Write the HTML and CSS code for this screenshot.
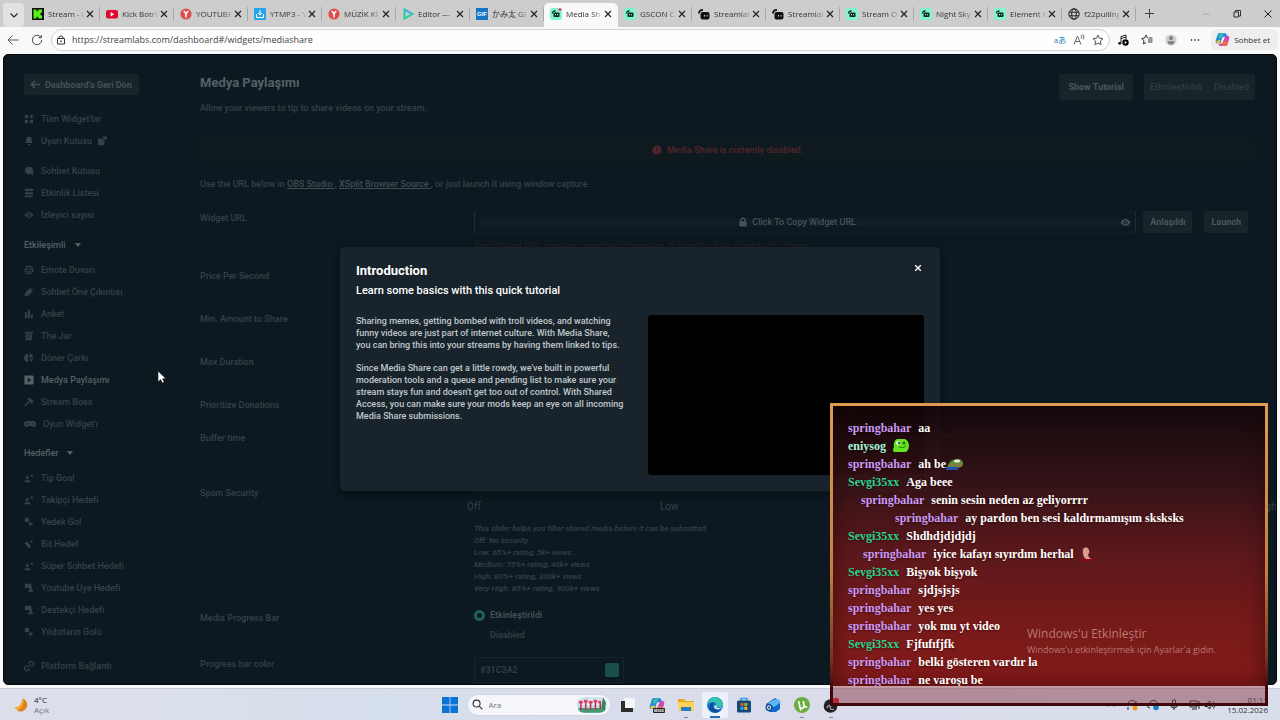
FILE: index.html
```html
<!DOCTYPE html>
<html lang="tr">
<head>
<meta charset="utf-8">
<title>Media Share</title>
<link rel="stylesheet" href="styles.css">
</head>
<body>
<svg class="defs" aria-hidden="true">
  <symbol id="x" viewBox="0 0 10 10"><path d="M2 2l6 6M8 2l-6 6" fill="none" stroke="currentColor" stroke-width="1.2"/></symbol>
  <symbol id="y" viewBox="0 0 12 12"><circle cx="6" cy="6" r="5.6" fill="#e04b4b"/><path d="M3.8 2.8L6 6l2.2-3.2M6 6v3.6" fill="none" stroke="#fff" stroke-width="1.5"/></symbol>
  <symbol id="sl" viewBox="0 0 12 12"><rect width="12" height="12" rx="3" fill="#80f5d2"/><rect x="3.500" y="4.500" width="6" height="4.500" rx="1" fill="#12251f"/><path d="M2.500 5.500Q2.300 3 5.500 3" fill="none" stroke="#12251f" stroke-width="1.300"/><path d="M5.500 6v1.300M7.500 6v1.300" stroke="#80f5d2"/></symbol>
  <symbol id="slb" viewBox="0 0 12 12"><rect x="2.500" y="4" width="9" height="7.500" rx="2" fill="#111"/><path d="M1 5.500Q1 1.800 5 1.800" fill="none" stroke="#111" stroke-width="1.800"/><path d="M6.500 7v1.500M9 7v1.500" stroke="#ccc"/></symbol>
  <symbol id="grid" viewBox="0 0 12 12"><path d="M1 1h4v4H1zM1 7h4v4H1zM7 7h4v4H7zM9 .5L11.500 3 9 5.500 6.500 3z" fill="currentColor"/></symbol>
  <symbol id="bell" viewBox="0 0 12 12"><path d="M6 1a3.300 3.300 0 013.300 3.300V7l1.700 1.500H1L2.700 7V4.300A3.300 3.300 0 016 1zM4.500 9.500h3a1.500 1.500 0 01-3 0z" fill="currentColor"/></symbol>
  <symbol id="ext" viewBox="0 0 12 12"><path d="M1 3h5v3h3v5H1z" fill="currentColor"/><path d="M5 7l5.500-5.500M7 1.500h4v4" fill="none" stroke="currentColor" stroke-width="1.800"/></symbol>
  <symbol id="chat" viewBox="0 0 12 12"><path d="M6 1a5 4.500 0 015 4.500V11L8.500 9.500A5 4.500 0 116 1z" fill="currentColor"/></symbol>
  <symbol id="list" viewBox="0 0 12 12"><path d="M1 1h10v2.500H1zM1 5h10v2.500H1zM1 9h10v2H1z" fill="currentColor"/></symbol>
  <symbol id="eye" viewBox="0 0 12 12"><path d="M.5 6Q6-1.500 11.500 6 6 13.500.5 6z" fill="currentColor"/><circle cx="6" cy="6" r="2.300" fill="#0d1a21"/><circle cx="6" cy="6" r="1.100" fill="currentColor"/></symbol>
  <symbol id="smile" viewBox="0 0 12 12"><circle cx="6" cy="6" r="4.500" fill="none" stroke="currentColor" stroke-width="1.600"/><path d="M1.500 5h9M4 7.500q2 1.500 4 0" fill="none" stroke="currentColor" stroke-width="1.300"/></symbol>
  <symbol id="pen" viewBox="0 0 12 12"><path d="M1 11l1-4 5-5 3 3-5 5zM8 1l3 3" fill="currentColor" stroke="currentColor"/></symbol>
  <symbol id="bars" viewBox="0 0 12 12"><path d="M1 4h2.500v7H1zM4.500 1H7v10H4.500zM8 7h2.500v4H8z" fill="currentColor"/></symbol>
  <symbol id="jar" viewBox="0 0 12 12"><path d="M1 1h10v2H1zM2 4h8l-1 7H2z" fill="currentColor"/><path d="M4 6h4M4 8h3" stroke="#0d1a21"/></symbol>
  <symbol id="wheel" viewBox="0 0 12 12"><path d="M5 1a5 5 0 000 10zM6.500 1a5 5 0 014.500 4.500L6.500 6zM6.500 7.500L11 7a5 5 0 01-3 3.500z" fill="currentColor"/></symbol>
  <symbol id="play" viewBox="0 0 12 12"><rect x=".5" y=".5" width="11" height="11" rx="1" fill="currentColor"/><path d="M4.500 3.300L8.700 6l-4.200 2.700z" fill="#0d1a21"/></symbol>
  <symbol id="boss" viewBox="0 0 12 12"><path d="M1 10.500l5-5M4.500 2l4 4M6.500 1.500l4 4-2 2" fill="none" stroke="currentColor" stroke-width="2"/></symbol>
  <symbol id="pad" viewBox="0 0 12 12"><path d="M3 3h6a3 3 0 010 6L7.500 8h-3L3 9a3 3 0 010-6z" fill="currentColor"/><path d="M2.500 6h2M8 6h1.500" stroke="#0d1a21"/></symbol>
  <symbol id="goal" viewBox="0 0 12 12"><circle cx="4" cy="5.500" r="1.800" fill="currentColor"/><path d="M.5 11q0-3 3.500-3t4 3z" fill="currentColor"/><path d="M9.500 1v4M7.500 3h4" stroke="currentColor"/></symbol>
  <symbol id="star" viewBox="0 0 12 12"><path d="M1 1h5v5H1zM8 5l1 2 2.500 1L9 9.300 8 11.500 7 9.300 4.500 8 7 7z" fill="currentColor"/></symbol>
  <symbol id="bit" viewBox="0 0 12 12"><path d="M1 5l2.500-1.500L8 8l-2 3zM9 1v4M7 3h4" fill="currentColor" stroke="currentColor"/></symbol>
  <symbol id="tube" viewBox="0 0 12 12"><path d="M1 1h8v5H1zM5 11q0-3 3-3t3 3z" fill="currentColor"/><circle cx="8" cy="6.500" r="1.800" fill="currentColor"/></symbol>
  <symbol id="link" viewBox="0 0 12 12"><path d="M5 3l1.500-1.500a2.500 2.500 0 014 4L9 7M7 9l-1.500 1.500a2.500 2.500 0 01-4-4L3 5M4 8l4-4" fill="none" stroke="currentColor" stroke-width="1.400"/></symbol>
  <symbol id="copilot" viewBox="0 0 16 16"><path d="M5 1h5q2 0 2.500 2l.5 2H9.500Q8 5 7.300 7L6 12H2Q0 12 1 8.500L2.700 3Q3.300 1 5 1z" fill="#2087dd"/><path d="M2 9l4-.5L5 12H2.500Q1 12 2 9z" fill="#f3c52d"/><path d="M11 4h2.500Q16 4 15 7.500L13.300 13q-.6 2-2.300 2H6q-2 0-2.500-2.500h3q1.500 0 2.100-2z" fill="#cb48bb"/><path d="M9 9l-1 3.500q-.5 2-2.500 2.500H11q1.800 0 2.300-2l1-3z" fill="#f1644f"/><path d="M4 3l3-2h3L7 6 4 7z" fill="#34bda9"/></symbol>
</svg>

<nav class="tabs" aria-label="Sekmeler">
  <button class="tab-menu" aria-label="Sekme menüsü"><svg viewBox="0 0 12 12"><path d="M2.500 4.500L6 8l3.500-3.500" fill="none" stroke="#222" stroke-width="1.100"/></svg></button>
  <div class="tab"><svg class="fav" viewBox="0 0 12 12"><rect width="12" height="12" fill="#111"/><path d="M1.500 1.500h3v2h1v-1h1v-1h3.500v3H9v1H8v1h1v1h1v3H6.500v-1h-1v-1h-1v2h-3z" fill="#55f51c"/></svg><span>Stream - K</span><svg class="close"><use href="#x"/></svg></div>
  <div class="tab"><svg class="fav" viewBox="0 0 12 12"><rect y="2" width="12" height="8.500" rx="2" fill="#e00831"/><path d="M4.700 4l3.500 2.200-3.500 2.200z" fill="#fff"/></svg><span>Kick Botri</span><svg class="close"><use href="#x"/></svg></div>
  <div class="tab"><svg class="fav"><use href="#y"/></svg><span>YOUTUBE</span><svg class="close"><use href="#x"/></svg></div>
  <div class="tab"><svg class="fav" viewBox="0 0 12 12"><rect width="12" height="12" rx="1" fill="#26a4e8"/><path d="M6 2v5M4 5l2 2 2-2M2.500 6v3.500h7V6" fill="none" stroke="#fff"/></svg><span>YTMP3 - Y</span><svg class="close"><use href="#x"/></svg></div>
  <div class="tab"><svg class="fav"><use href="#y"/></svg><span>MÜZİK Kİ</span><svg class="close"><use href="#x"/></svg></div>
  <div class="tab"><svg class="fav" viewBox="0 0 12 12"><path d="M2.500 1.500v9L10.500 6z" fill="none" stroke="#20cfa4" stroke-width="2"/><path d="M3 2l7 4" stroke="#51a7f5" stroke-width="1.500"/></svg><span>Editor — C</span><svg class="close"><use href="#x"/></svg></div>
  <div class="tab"><svg class="fav" viewBox="0 0 12 12"><rect width="12" height="12" fill="#1674c6"/><text x="6" y="8" class="gif" text-anchor="middle">GIF</text></svg><span>かみ太 GIF</span><svg class="close"><use href="#x"/></svg></div>
  <div class="tab active"><svg class="fav" viewBox="0 0 12 12"><use href="#sl"/><circle cx="10" cy="1.500" r="1.500" fill="#ed4265"/></svg><span>Media Sha</span><svg class="close"><use href="#x"/></svg></div>
  <div class="tab"><svg class="fav"><use href="#sl"/></svg><span>GSCON Cl</span><svg class="close"><use href="#x"/></svg></div>
  <div class="tab"><svg class="fav"><use href="#slb"/></svg><span>Streamlab</span><svg class="close"><use href="#x"/></svg></div>
  <div class="tab"><svg class="fav"><use href="#slb"/></svg><span>Streamlab</span><svg class="close"><use href="#x"/></svg></div>
  <div class="tab"><svg class="fav"><use href="#sl"/></svg><span>Stream Ov</span><svg class="close"><use href="#x"/></svg></div>
  <div class="tab"><svg class="fav"><use href="#sl"/></svg><span>Night Sky</span><svg class="close"><use href="#x"/></svg></div>
  <div class="tab"><svg class="fav"><use href="#sl"/></svg><span>Element H</span><svg class="close"><use href="#x"/></svg></div>
  <div class="tab"><svg class="fav" viewBox="0 0 12 12"><g fill="none" stroke="#222"><circle cx="6" cy="6" r="5.200"/><ellipse cx="6" cy="6" rx="2.300" ry="5.200"/><path d="M1.300 4.200h9.400M1.300 7.800h9.400"/></g></svg><span>f22pulling</span><svg class="close"><use href="#x"/></svg></div>
  <button class="new-tab" aria-label="Yeni sekme"><svg viewBox="0 0 12 12"><path d="M6 1v10M1 6h10" stroke="#333"/></svg></button>
  <div class="win">
    <button aria-label="Simge durumuna küçült"><svg viewBox="0 0 12 12"><path d="M2.500 6h7" stroke="#aaa"/></svg></button>
    <button aria-label="Önceki boyut"><svg viewBox="0 0 12 12"><path d="M3 4h4.500v5H3zM4.500 4V2.500h5V8H8" fill="none" stroke="#333"/></svg></button>
    <button aria-label="Kapat"><svg viewBox="0 0 12 12"><path d="M2.500 2.500l7 7M9.500 2.500l-7 7" stroke="#222"/></svg></button>
  </div>
</nav>

<div class="toolbar">
  <button aria-label="Geri"><svg viewBox="0 0 12 12"><path d="M11.500 6H1.500M5.500 1.500L1 6l4.500 4.500" fill="none" stroke="#555"/></svg></button>
  <button aria-label="Yenile"><svg viewBox="0 0 12 12"><path d="M10 3.500A4.700 4.700 0 1010.700 6M10.300 1v2.700H7.500" fill="none" stroke="#444"/></svg></button>
  <div class="address">
    <svg viewBox="0 0 12 12"><path d="M2.500 4.500h7v5.500h-7zM4 4.500V3q2-2.500 4 0v1.500" fill="none" stroke="#333"/><circle cx="6" cy="7.200" r=".8"/></svg>
    <input type="text" aria-label="Adres" value="https://streamlabs.com/dashboard#/widgets/mediashare">
    <button class="translate" aria-label="Çevir">aあ</button>
    <button class="read" aria-label="Sesli oku"><svg viewBox="0 0 12 12"><path d="M1 10.500L4.500 2 8 10.500M2.300 7.500h4.400M8 1q1.500 1.500 0 3.500M10 .5q2 2.500 0 5" fill="none" stroke="#666"/></svg></button>
    <button aria-label="Sık kullanılanlara ekle"><svg viewBox="0 0 12 12"><path d="M6 1l1.500 3.300 3.500.4-2.600 2.400.7 3.600L6 9l-3.100 1.700.7-3.600L1 4.700l3.500-.4z" fill="none" stroke="#555"/></svg></button>
  </div>
  <button aria-label="Medya"><svg viewBox="0 0 12 12"><path d="M4 9V2.500L9 1v4M4 4.500L9 3" fill="none" stroke="#222"/><circle cx="2.700" cy="9.300" r="1.400"/><circle cx="8.500" cy="8.500" r="3.200"/><path d="M7.700 7l2.300 1.500-2.300 1.500z" fill="#fff"/></svg></button>
  <button aria-label="Sık kullanılanlar"><svg viewBox="0 0 12 12"><path d="M7.500 4L6.500 3.800 5 1 3.700 4 .7 4.500 3 6.600 2.500 10 5 8.500M7 6h4.500M7 8h4.500M8 4h3.500" fill="none" stroke="#333"/></svg></button>
  <button class="avatar" aria-label="Profil"><svg viewBox="0 0 16 16"><circle cx="8" cy="8" r="7.500" fill="#d0cfce"/><circle cx="8" cy="5.500" r="2.700" fill="#838180"/><path d="M3.500 9.500h9Q12.500 14 8 14T3.500 9.500z" fill="#838180"/></svg></button>
  <button aria-label="Ayarlar"><svg viewBox="0 0 12 12"><circle cx="2.500" cy="6" r=".8"/><circle cx="6" cy="6" r=".8"/><circle cx="9.500" cy="6" r=".8"/></svg></button>
  <button class="copilot"><svg><use href="#copilot"/></svg>Sohbet et</button>
</div>

<div class="page">
  <aside class="side">
    <button class="back"><svg viewBox="0 0 12 12"><path d="M11 6H2M5.500 2L1.500 6l4 4" fill="none" stroke="currentColor" stroke-width="1.600"/></svg>Dashboard'a Geri Dön</button>
    <nav>
      <ul>
        <li><a href="#"><svg><use href="#grid"/></svg>Tüm Widget'lar</a></li>
        <li><a href="#"><svg><use href="#bell"/></svg>Uyarı Kutusu<svg class="ext"><use href="#ext"/></svg></a></li>
      </ul>
      <ul>
        <li><a href="#"><svg><use href="#chat"/></svg>Sohbet Kutusu</a></li>
        <li><a href="#"><svg><use href="#list"/></svg>Etkinlik Listesi</a></li>
        <li><a href="#"><svg><use href="#eye"/></svg>İzleyici sayısı</a></li>
      </ul>
      <button class="group">Etkileşimli<i></i></button>
      <ul class="sub">
        <li><a href="#"><svg><use href="#smile"/></svg>Emote Duvarı</a></li>
        <li><a href="#"><svg><use href="#pen"/></svg>Sohbet Öne Çıkıntısı</a></li>
        <li><a href="#"><svg><use href="#bars"/></svg>Anket</a></li>
        <li><a href="#"><svg><use href="#jar"/></svg>The Jar</a></li>
        <li><a href="#"><svg><use href="#wheel"/></svg>Döner Çarkı</a></li>
        <li><a href="#" class="current"><svg><use href="#play"/></svg>Medya Paylaşımı</a></li>
        <li><a href="#"><svg><use href="#boss"/></svg>Stream Boss</a></li>
        <li><a href="#"><svg class="wide"><use href="#pad"/></svg>Oyun Widget'ı</a></li>
      </ul>
      <button class="group">Hedefler<i></i></button>
      <ul class="sub">
        <li><a href="#"><svg><use href="#goal"/></svg>Tip Goal</a></li>
        <li><a href="#"><svg><use href="#goal"/></svg>Takipçi Hedefi</a></li>
        <li><a href="#"><svg><use href="#star"/></svg>Yedek Gol</a></li>
        <li><a href="#"><svg><use href="#bit"/></svg>Bit Hedef</a></li>
        <li><a href="#"><svg><use href="#goal"/></svg>Süper Sohbet Hedefi</a></li>
        <li><a href="#"><svg><use href="#tube"/></svg>Youtube Üye Hedefi</a></li>
        <li><a href="#"><svg><use href="#tube"/></svg>Destekçi Hedefi</a></li>
        <li><a href="#"><svg><use href="#star"/></svg>Yıldızların Golü</a></li>
      </ul>
      <ul class="last">
        <li><a href="#"><svg><use href="#link"/></svg>Platform Bağlantı</a></li>
      </ul>
    </nav>
  </aside>

  <main class="main">
    <header class="head">
      <div>
        <h1>Medya Paylaşımı</h1>
        <p>Allow your viewers to tip to share videos on your stream.</p>
      </div>
      <button class="btn tall">Show Tutorial</button>
      <div class="toggle"><button>Etkinleştirildi</button><button>Disabled</button></div>
    </header>
    <div class="alert"><svg viewBox="0 0 12 12"><circle cx="6" cy="6" r="5.500" fill="currentColor"/><path d="M6 3v3.500M6 7.800v1.300" stroke="#0f191f" stroke-width="1.300"/></svg>Media Share is currently disabled.</div>
    <p class="hint">Use the URL below in <a href="#">OBS Studio </a>, <a href="#">XSplit Browser Source </a>, or just launch it using window capture.</p>

    <form class="form">
      <div class="row r-url">
        <label for="url">Widget URL</label>
        <div>
          <div class="url-line">
            <div class="url-box">
              <input id="url" type="text" readonly>
              <span class="copy"><svg viewBox="0 0 12 12"><path d="M1.500 5h9v6.500h-9z" fill="currentColor"/><path d="M3.500 6V4a2.500 2.500 0 015 0v2" fill="none" stroke="currentColor" stroke-width="1.600"/></svg>Click To Copy Widget URL</span>
              <svg class="reveal"><use href="#eye"/></svg>
            </div>
            <button type="button" class="btn">Anlaşıldı</button>
            <button type="button" class="btn launch">Launch</button>
          </div>
          <p class="warn">Your Widget URL contains sensitive information. It should not be shared with others.</p>
        </div>
      </div>
      <div class="row"><label for="price">Price Per Second</label><input id="price" class="field" type="text"></div>
      <div class="row"><label for="min">Min. Amount to Share</label><input id="min" class="field" type="text"></div>
      <div class="row"><label for="max">Max Duration</label><input id="max" class="field" type="text"></div>
      <div class="row r-short"><label for="prio">Prioritize Donations</label><input id="prio" type="checkbox"></div>
      <div class="row r-buffer"><label for="buffer">Buffer time</label><input id="buffer" type="range" min="0" max="30" value="0"></div>
      <div class="row r-spam">
        <label for="spam">Spam Security</label>
        <div>
          <input id="spam" type="range" min="0" max="4" value="2">
          <div class="ticks"><span>Off</span><span>Low</span><span>Medium</span><span>High</span><span>Very High</span></div>
          <p class="help">This slider helps you filter shared media before it can be submitted.<br>Off: No security<br>Low: 65%+ rating, 5k+ views<br>Medium: 75%+ rating, 40k+ views<br>High: 80%+ rating, 300k+ views<br>Very High: 85%+ rating, 900k+ views</p>
        </div>
      </div>
      <div class="row r-media" role="radiogroup" aria-labelledby="mpb">
        <span class="label" id="mpb">Media Progress Bar</span>
        <div class="radios">
          <label><input type="radio" name="bar" checked><span>Etkinleştirildi</span></label>
          <label><input type="radio" name="bar"><span>Disabled</span></label>
        </div>
      </div>
      <div class="row">
        <label for="color">Progress bar color</label>
        <div class="color"><input id="color" type="text" value="#31C3A2"><i></i></div>
      </div>
    </form>
  </main>

  <div class="overlay">
    <section class="modal" role="dialog" aria-labelledby="mt">
      <header><h2 id="mt">Introduction</h2><button aria-label="Kapat"><svg viewBox="0 0 10 10"><path d="M1.500 1.500l7 7M8.500 1.500l-7 7" stroke="currentColor" stroke-width="1.700"/></svg></button></header>
      <h3>Learn some basics with this quick tutorial</h3>
      <div class="modal-body">
        <div class="copytext">
          <p class="narrow">Sharing memes, getting bombed with troll videos, and watching funny videos are just part of internet culture. With Media Share, you can bring this into your streams by having them linked to tips.</p>
          <p>Since Media Share can get a little rowdy, we've built in powerful moderation tools and a queue and pending list to make sure your stream stays fun and doesn't get too out of control. With Shared Access, you can make sure your mods keep an eye on all incoming Media Share submissions.</p>
        </div>
        <div class="video"></div>
      </div>
    </section>
  </div>
  <svg class="cursor" viewBox="0 0 10 14"><path d="M1 1v11l2.600-2.400L5.300 13l1.900-.8-1.600-3.500H9z" fill="#fff" stroke="#111" stroke-width=".6"/></svg>
</div>

<footer class="taskbar">
  <div class="weather">
    <svg viewBox="0 0 16 16"><path d="M10 1a7 7 0 11-9 10Q9 12 10 1z" fill="#f5a623"/><path d="M11.500 2a7 7 0 01-7 12.500Q12 12 11.500 2z" fill="#dd7f1c"/></svg>
    <p><b>4°C</b><span>Açık</span></p>
  </div>
  <div class="apps">
    <button aria-label="Başlat"><svg viewBox="0 0 16 16"><path d="M0 0h7.600v7.600H0zM8.400 0H16v7.600H8.400zM0 8.400h7.600V16H0zM8.400 8.400H16V16H8.400z" fill="#0a74d6"/></svg></button>
    <label class="search"><svg viewBox="0 0 12 12"><circle cx="5" cy="5" r="3.800" fill="none" stroke="#333" stroke-width="1.200"/><path d="M8 8l3.300 3.300" stroke="#333" stroke-width="1.200"/></svg><input type="text" placeholder="Ara" aria-label="Ara">
      <svg class="scene" viewBox="0 0 32 18"><rect y="1" width="31" height="16" rx="8" fill="#bfe2e8"/><path d="M1 12h29q-2 5-8 5H8q-6 0-7-5z" fill="#489872"/><path d="M4 3h18q5 0 5 6H2q0-4 2-6z" fill="#e8eff0"/><path d="M4 7v7M9 6v8M14 7v7M19 6v8M24 7v6" stroke="#c72b50" stroke-width="1.600"/><path d="M2 6h4M7 5h4M12 6h4M17 5h4M22 6h3" stroke="#d84068" stroke-width="3"/><path d="M27 1l3 6-2 9-3-5z" fill="#34865d"/></svg>
    </label>
    <button aria-label="Görev görünümü"><svg viewBox="0 0 16 16"><rect x="4" y="1" width="11" height="10" rx="1" fill="#f5f5f3"/><path d="M1 4h4v7h8v4H1z" fill="#2d2d2d"/></svg></button>
    <button aria-label="Copilot"><svg viewBox="0 0 16 16"><use href="#copilot"/><rect x="4" y="11" width="12" height="5" rx="1" fill="#222"/><text class="m365" x="10" y="15" text-anchor="middle">M365</text></svg></button>
    <button class="open" aria-label="Dosya Gezgini"><svg viewBox="0 0 16 16"><path d="M0 2h6l1.500 2H16v10H0z" fill="#e9a91e"/><path d="M0 5h16v9H0z" fill="#fcd158"/><path d="M3 10h10v4H3z" fill="#277cc8"/></svg></button>
    <button class="open on" aria-label="Edge"><svg viewBox="0 0 16 16"><circle cx="8" cy="8" r="8" fill="#1573c6"/><path d="M.5 6Q2 0 8 0t8 7q0 3-4 3.500-3 0-3-2Q9 5 6 5 2 5 .5 8z" fill="#35c1b1"/><path d="M6 7q-1 4 3 6 3 1.500 5-.5Q11 17 6 15T3 8q1-3 4-2z" fill="#0b4e9c"/><path d="M9 8.500q0 3 4 2.500l2-1Q13 13 9.500 12T8 8z" fill="#dceefa"/></svg></button>
    <button aria-label="Store"><svg viewBox="0 0 16 16"><path d="M5 4V1.500h6V4" fill="none" stroke="#2f9bdd" stroke-width="1.400"/><rect x="1" y="3.500" width="14" height="12" rx="1.500" fill="#14477a"/><path d="M4.500 6h3v3h-3z" fill="#f0522c"/><path d="M8.300 6h3v3h-3z" fill="#82bd2c"/><path d="M4.500 9.800h3v3h-3z" fill="#22a6ee"/><path d="M8.300 9.800h3v3h-3z" fill="#fbbb26"/></svg></button>
    <button aria-label="Posta"><svg viewBox="0 0 16 16"><path d="M1 7l9-6 5 3v8l-4 3H4z" fill="#1469c8"/><path d="M3 6l8-4 5 3-7 5z" fill="#5db9f1"/><circle cx="4" cy="10.500" r="3.500" fill="#164d91"/><circle cx="4" cy="10.500" r="1.700" fill="none" stroke="#fff"/></svg></button>
    <button class="open" aria-label="uTorrent"><svg viewBox="0 0 16 16"><circle cx="8" cy="8" r="8" fill="#6cad40"/><path d="M4.500 4L6 10q.8 2 3 1 1.500-1 1-3L9.300 4M10 8q1 3 3 1.500M5.500 8.500l1.300 5" fill="none" stroke="#fff" stroke-width="1.600"/></svg></button>
    <button class="open obs" aria-label="OBS"><svg viewBox="0 0 16 16"><circle cx="7.500" cy="9" r="6.800" fill="#242024"/><path d="M7 4q4 1 2 5M4 11q1-4 5-2M11 12q-4 2-4-3" fill="none" stroke="#aaa" stroke-width="1.200"/><circle cx="13" cy="4" r="3.300" fill="#e51325"/></svg></button>
  </div>
  <div class="tray">
    <svg viewBox="0 0 12 12"><path d="M3 7.500L6 4.500l3 3" fill="none" stroke="#222"/></svg>
    <svg viewBox="0 0 12 12"><path d="M2 6a4 4 0 018-1M10 2v3H7M2 11V8" fill="none" stroke="#222"/><circle cx="9" cy="9" r="2.500" fill="#f09a25"/></svg>
    <svg viewBox="0 0 12 12"><path d="M3 9a2.500 2.500 0 010-5 3.500 3 0 017 1" fill="none" stroke="#222"/><circle cx="9" cy="8.500" r="2.800" fill="#167fd1"/></svg>
    <svg viewBox="0 0 12 12"><path d="M4.500 1h3v6h-3zM2.500 5q0 4 3.500 4t3.500-4M6 9v2" fill="none" stroke="#222"/></svg>
    <svg viewBox="0 0 12 12"><path d="M1 2h7v6H1zM3 10h5M10 2v8" fill="none" stroke="#222"/></svg>
    <svg class="sound" viewBox="0 0 12 12"><path d="M1 4.500h2L6 2v8L3 7.500H1zM8 4q1.500 2 0 4M9.500 2.500q3 3.500 0 7" fill="none" stroke="#222"/></svg>
    <p class="clock"><span>01:11</span><span>15.02.2026</span></p>
  </div>
</footer>

<section class="chat" aria-label="Sohbet">
  <ol>
    <li><b class="sb">springbahar</b>aa</li>
    <li><b class="en">eniysog</b><svg viewBox="0 0 16 14"><path d="M4 0h8q4 2 4 7-1 6-4 6H1q-2-2 0-5Q0 2 4 0z" fill="#63e421"/><circle cx="5" cy="4" r="2" fill="#d9ffd0"/><circle cx="6" cy="4" r=".9"/><circle cx="11" cy="4" r="1.500" fill="#216b18"/><path d="M6 8q4 2 7-1" fill="none" stroke="#1f7813"/></svg></li>
    <li><b class="sb">springbahar</b>ah be<svg class="tight" viewBox="0 0 18 14"><path d="M2 8Q5 1 14 2l3 3q1 5-5 6H1z" fill="#628b3b"/><ellipse cx="11" cy="4" rx="3" ry="1.500" fill="#e7eedb"/><path d="M6 8h10" stroke="#a56b45"/><path d="M0 10h12v3H0z" fill="#254dac"/></svg></li>
    <li><b class="sv">Sevgi35xx</b>Aga beee</li>
    <li class="in1"><b class="sb">springbahar</b>senin sesin neden az geliyorrrr</li>
    <li class="in3"><b class="sb">springbahar</b>ay pardon ben sesi kaldırmamışım sksksks</li>
    <li><b class="sv">Sevgi35xx</b>Shdhdjdjdjdj</li>
    <li class="in2"><b class="sb">springbahar</b>iyice kafayı sıyırdım herhal<svg class="wide" viewBox="0 0 18 14"><path d="M2 12q6-3 15 0l-4 2H5z" fill="#8e0c15"/><path d="M5 2q4-4 6 1 1 4-1 4 0 3 3 5H8Q4 9 5 2z" fill="#dc9b8c"/></svg></li>
    <li><b class="sv">Sevgi35xx</b>Bişyok bişyok</li>
    <li><b class="sb">springbahar</b>sjdjsjsjs</li>
    <li><b class="sb">springbahar</b>yes yes</li>
    <li><b class="sb">springbahar</b>yok mu yt video</li>
    <li><b class="sv">Sevgi35xx</b>Fjfufıfjfk</li>
    <li><b class="sb">springbahar</b>belki gösteren vardır la</li>
    <li><b class="sb">springbahar</b>ne varoşu be</li>
  </ol>
  <div class="activate"><strong>Windows'u Etkinleştir</strong><span>Windows'u etkinleştirmek için Ayarlar'a gidin.</span></div>
</section>
</body>
</html>
```
FILE: styles.css
```css
* { box-sizing: border-box; }
body, h1, h2, h3, p, ul, ol { margin: 0; padding: 0; }
ul, ol { list-style: none; }
button, input { font: inherit; color: inherit; border: 0; background: none; padding: 0; margin: 0; }
input { min-width: 0; outline: 0; }
a { color: inherit; }
svg { display: block; flex: none; }
.defs { position: absolute; width: 0; height: 0; }

body {
  height: 100vh;
  display: flex;
  flex-direction: column;
  position: relative;
  overflow: hidden;
  background: #f9f9fa;
  font: 9px/12px "Open Sans", "Noto Sans CJK JP", sans-serif;
  color: #333;
}

/* Tab strip */
.tabs { display: flex; flex: none; height: 27px; background: #cdcdcd; align-items: stretch; font-size: 8px; }
.tab-menu { width: 21px; margin: 3px 2px 0 3px; border-radius: 4px; background: #e2e2e2; display: grid; place-items: center; }
.tab-menu svg { width: 12px; height: 12px; }
.tab { flex: 0 1 74px; min-width: 0; height: 24px; margin-top: 3px; padding: 0 5px 3px 6px; display: flex; align-items: center; gap: 4px; position: relative; }
.tab:not(.active)::after { content: ""; width: 1px; height: 14px; background: #aaa; position: absolute; right: 0; top: 4px; }
.tab.active { background: #f9f9fa; border-radius: 5px 5px 0 0; }
.tab span { flex: 1; overflow: hidden; white-space: nowrap; color: #333; mask-image: linear-gradient(90deg, #000 75%, #0004); }
.fav { width: 12px; height: 12px; }
.gif { font: bold 6px "Liberation Sans", sans-serif; fill: #fff; }
.close { width: 10px; height: 10px; margin-left: -2px; color: #222; }
.new-tab { width: 26px; display: grid; place-items: center; }
.new-tab svg { width: 11px; height: 11px; }
.win { flex: 1; display: flex; justify-content: flex-end; gap: 19px; padding-right: 6px; }
.win svg { width: 12px; height: 12px; }

/* Address bar */
.toolbar { flex: none; height: 27px; display: flex; align-items: center; gap: 12px; padding: 0 2px 2px 7px; }
.toolbar svg { width: 12px; height: 12px; }
.address { flex: 1; height: 22px; border: 1px solid #d0d3d3; border-radius: 11px; background: #fefefe; display: flex; align-items: center; gap: 7px; padding: 0 5px 0 3px; margin: 0 -5px 0 -4px; }
.address input { flex: 1; height: 20px; margin-left: -2px; font-size: 9px; color: #444; }
.translate { color: #2380b4; font-size: 8px; }
.copilot { height: 21px; margin-left: -2px; padding: 0 8px 0 4px; display: flex; align-items: center; gap: 4px; border-radius: 6px; background: #eeeeee; font-size: 8px; }
.toolbar .copilot svg { width: 15px; height: 15px; }

/* Dimmed dashboard */
.page {
  flex: 1;
  min-height: 0;
  margin: 0 3px 3px;
  padding: 19px 21px 0 20px;
  border: 1px solid #03090c;
  border-radius: 5px;
  background: #0c1920;
  display: flex;
  overflow: hidden;
  position: relative;
  font: 500 9px/12px Roboto, sans-serif;
  color: #354148;
}
.side { width: 156px; flex: none; margin-right: 20px; }
.back { height: 21px; padding: 0 7px 0 6px; display: flex; align-items: center; gap: 4px; border-radius: 2px; background: #18232a; color: #455057; font-weight: 700; }
.back svg { width: 11px; height: 11px; }
.side nav { padding-top: 13px; }
.side ul + ul { margin-top: 8px; }
.side ul.last { margin-top: 12px; }
.side li a { height: 22px; display: flex; align-items: center; gap: 7px; text-decoration: none; }
.side li svg { width: 10px; height: 10px; }
.side li svg.wide { width: 12px; height: 12px; }
.side li .ext { margin-left: -2px; }
.side .current, .group { color: #566067; }
.group { height: 22px; margin-top: 8px; display: flex; align-items: center; gap: 9px; }
.group i { border: 3px solid transparent; border-top: 4px solid; border-bottom: 0; }
.side .sub { margin-top: 3px; }
.sub + .group { margin-top: 7px; }

.main { flex: 1; min-width: 0; }
.head { display: flex; align-items: flex-start; }
.head > div:first-child { flex: 1; }
h1 { font-size: 13px; line-height: 18px; font-weight: 700; color: #566067; }
.head p { margin-top: 10px; }
.btn { height: 22px; padding: 0 7px; border-radius: 2px; background: #18232a; color: #4d575d; font-weight: 700; }
.btn.tall { height: 26px; padding: 0 9px; }
.toggle { height: 26px; margin-left: 11px; padding: 0 6px; display: flex; gap: 12px; border-radius: 2px; background: #18232a; color: #303c43; }
.alert { height: 27px; margin-top: 22px; display: flex; align-items: center; justify-content: center; gap: 5px; border-radius: 3px; background: #0f1a1f; color: #54242b; }
.alert svg { width: 10px; height: 10px; }
.hint { margin-top: 15px; }
.hint a { color: #414c53; }

.form { margin-top: 21px; }
.row { display: grid; grid-template-columns: 274px 1fr; align-items: start; min-height: 43px; }
.row > label, .row > .label { padding-top: 1px; }
.r-url { min-height: 58px; }
.r-short { min-height: 33px; }
.r-buffer { min-height: 55px; }
.r-spam { min-height: 121px; }
.r-media { min-height: 50px; }
.r-media > .label { padding-top: 5px; }
.url-line { display: flex; padding-right: 7px; }
.url-box { flex: 1; height: 22px; border: 1px solid #111e25; border-left-color: #202b32; border-right-color: #202b32; display: flex; align-items: center; position: relative; }
.url-box input { width: 100%; height: 8px; margin: 0 4px; background: #101d24; }
.copy { position: absolute; inset: 0; display: flex; align-items: center; justify-content: center; gap: 4px; color: #46525a; padding-right: 16px; }
.copy svg { width: 10px; height: 10px; }
.reveal { position: absolute; right: 4px; width: 11px; height: 11px; color: #46525a; }
.url-line .btn { margin-left: 7px; }
.url-line .launch { margin-left: 12px; }
.warn { margin-top: 7px; color: #2f2229; font-weight: 400; }
.field { width: 150px; height: 22px; border: 1px solid #18252d; }
input[type="range"] { appearance: none; display: block; width: 100%; height: 2px; margin: 4px 0; background: #1f2d33; }
input[type="range"]::-webkit-slider-thumb { appearance: none; width: 12px; height: 6px; border-radius: 2px; background: #223039; }
.ticks { display: flex; justify-content: space-between; margin-top: 9px; font-weight: 400; font-size: 10px; }
.ticks span { width: 0; display: flex; justify-content: center; white-space: nowrap; }
.help { margin-top: 10px; font-size: 8px; font-style: italic; }
.radios { display: grid; gap: 4px; }
.radios label { height: 16px; display: flex; align-items: center; gap: 5px; color: #4a555b; }
.radios label + label { color: #354148; }
.radios input { appearance: none; width: 11px; height: 11px; border: 1px solid #0e1b22; border-radius: 50%; }
.radios input:checked { border: 3px solid #245e58; }
.color { width: 150px; height: 26px; padding: 0 4px 0 5px; border: 1px solid #17232a; display: flex; align-items: center; }
.color input { flex: 1; }
.color i { width: 14px; height: 14px; border-radius: 2px; background: #1c4f4c; }

.overlay { position: absolute; inset: 0; display: grid; place-items: center; padding-bottom: 2px; }
.modal { width: 600px; padding: 15px 16px 16px; border-radius: 5px; background: #18232b; color: #c0c8cb; box-shadow: 0 2px 8px #050d12; }
.modal header { display: flex; justify-content: space-between; }
h2 { font-size: 13px; line-height: 18px; font-weight: 700; color: #fff; }
.modal header button { width: 12px; height: 12px; color: #fff; }
.modal header svg { width: 8px; height: 8px; margin: 2px; }
h3 { margin-top: 5px; font-size: 11px; line-height: 12px; font-weight: 500; color: #fff; }
.modal-body { display: flex; justify-content: space-between; margin-top: 18px; }
.copytext { width: 280px; margin-right: -4px; }
.copytext p + p { margin-top: 11px; }
.copytext .narrow { padding-right: 10px; }
.video { width: 276px; height: 160px; border-radius: 3px; background: #000; }
.cursor { position: absolute; left: 153px; top: 315px; width: 10px; height: 14px; }

/* Taskbar */
.taskbar { flex: none; height: 32px; display: grid; grid-template-columns: 1fr auto 1fr; align-items: center; border-top: 1px solid #c9cad4; background: linear-gradient(90deg, #dddfeb, #d6dfec 30%, #dadceb 60%, #d8dfeb); font-size: 8px; line-height: 10px; }
.weather { display: flex; align-items: center; gap: 6px; padding-left: 13px; }
.weather > svg { width: 15px; height: 15px; }
.weather p, .clock { display: grid; }
.weather b { font-weight: 400; color: #222; }
.weather span { color: #70737c; }
.apps { display: flex; align-items: center; gap: 3px; }
.apps button { width: 26px; height: 26px; display: grid; place-items: center; border-radius: 3px; position: relative; }
.apps button svg { width: 16px; height: 16px; }
.apps .on { background: #edf1f9; }
.open::after { content: ""; position: absolute; left: 11px; bottom: 0; width: 4px; height: 1px; background: #83868e; }
.on::after { left: 8px; width: 10px; height: 2px; background: #276bac; }
.search { width: 144px; height: 22px; border: 1px solid #d5d8e2; border-radius: 11px; background: #f4f6fc; display: flex; align-items: center; gap: 6px; padding: 0 2px 0 4px; margin: 0 1px; }
.search > svg { width: 11px; height: 11px; }
.search input { flex: 1; }
.search .scene { width: 31px; height: 18px; }
.m365 { font: bold 4px "Liberation Sans", sans-serif; fill: #fff; }
.tray { display: flex; justify-content: flex-end; align-items: center; gap: 9px; padding-right: 12px; color: #333; }
.tray svg { width: 12px; height: 12px; }
.tray .sound { margin-left: -6px; }
.clock { text-align: right; margin-left: 2px; }

/* Stream chat, floats over the desktop */
.chat {
  position: absolute;
  right: 12px;
  bottom: 14px;
  width: 438px;
  height: 303px;
  border: 3px solid;
  border-image: linear-gradient(#e09a50, #c7803d 55%, #763323 85%, #3f060b 95%) 1;
  background: linear-gradient(rgba(20, 7, 10, .86), rgba(56, 17, 21, .88) 25%, rgba(98, 24, 27, .93) 50%, rgba(121, 26, 25, .97) 72%, rgba(134, 26, 25, .98) 280px, rgba(140, 60, 75, .5) 280px);
  color: #fff;
  font: bold 12px/18px "Liberation Serif", serif;
  padding-top: 13px;
}
.chat::before { content: ""; position: absolute; inset: 0 0 17px; box-shadow: inset 0 0 20px rgba(30, 0, 5, .5); }
.chat ol { height: 267px; overflow: hidden; padding-left: 15px; position: relative; text-shadow: 0 1px 2px #2008; }
.chat li { display: flex; align-items: center; white-space: nowrap; height: 18px; }
.chat b { margin-right: 7px; }
.chat .in1 { padding-left: 13px; }
.chat .in2 { padding-left: 15px; }
.chat .in3 { padding-left: 47px; }
.chat li svg { width: 16px; height: 14px; }
.chat li svg.tight { width: 18px; }
.chat li svg.wide { width: 18px; margin-left: 4px; }
.sb { color: #c99af5; }
.en { color: #a4f5dc; }
.sv { color: #28d58e; }
.activate { position: absolute; left: 194px; top: 219px; display: grid; color: #ba7775; font: 9px/14px "Open Sans", sans-serif; white-space: nowrap; }
.activate strong { font-size: 12px; line-height: 18px; font-weight: 400; }
```
